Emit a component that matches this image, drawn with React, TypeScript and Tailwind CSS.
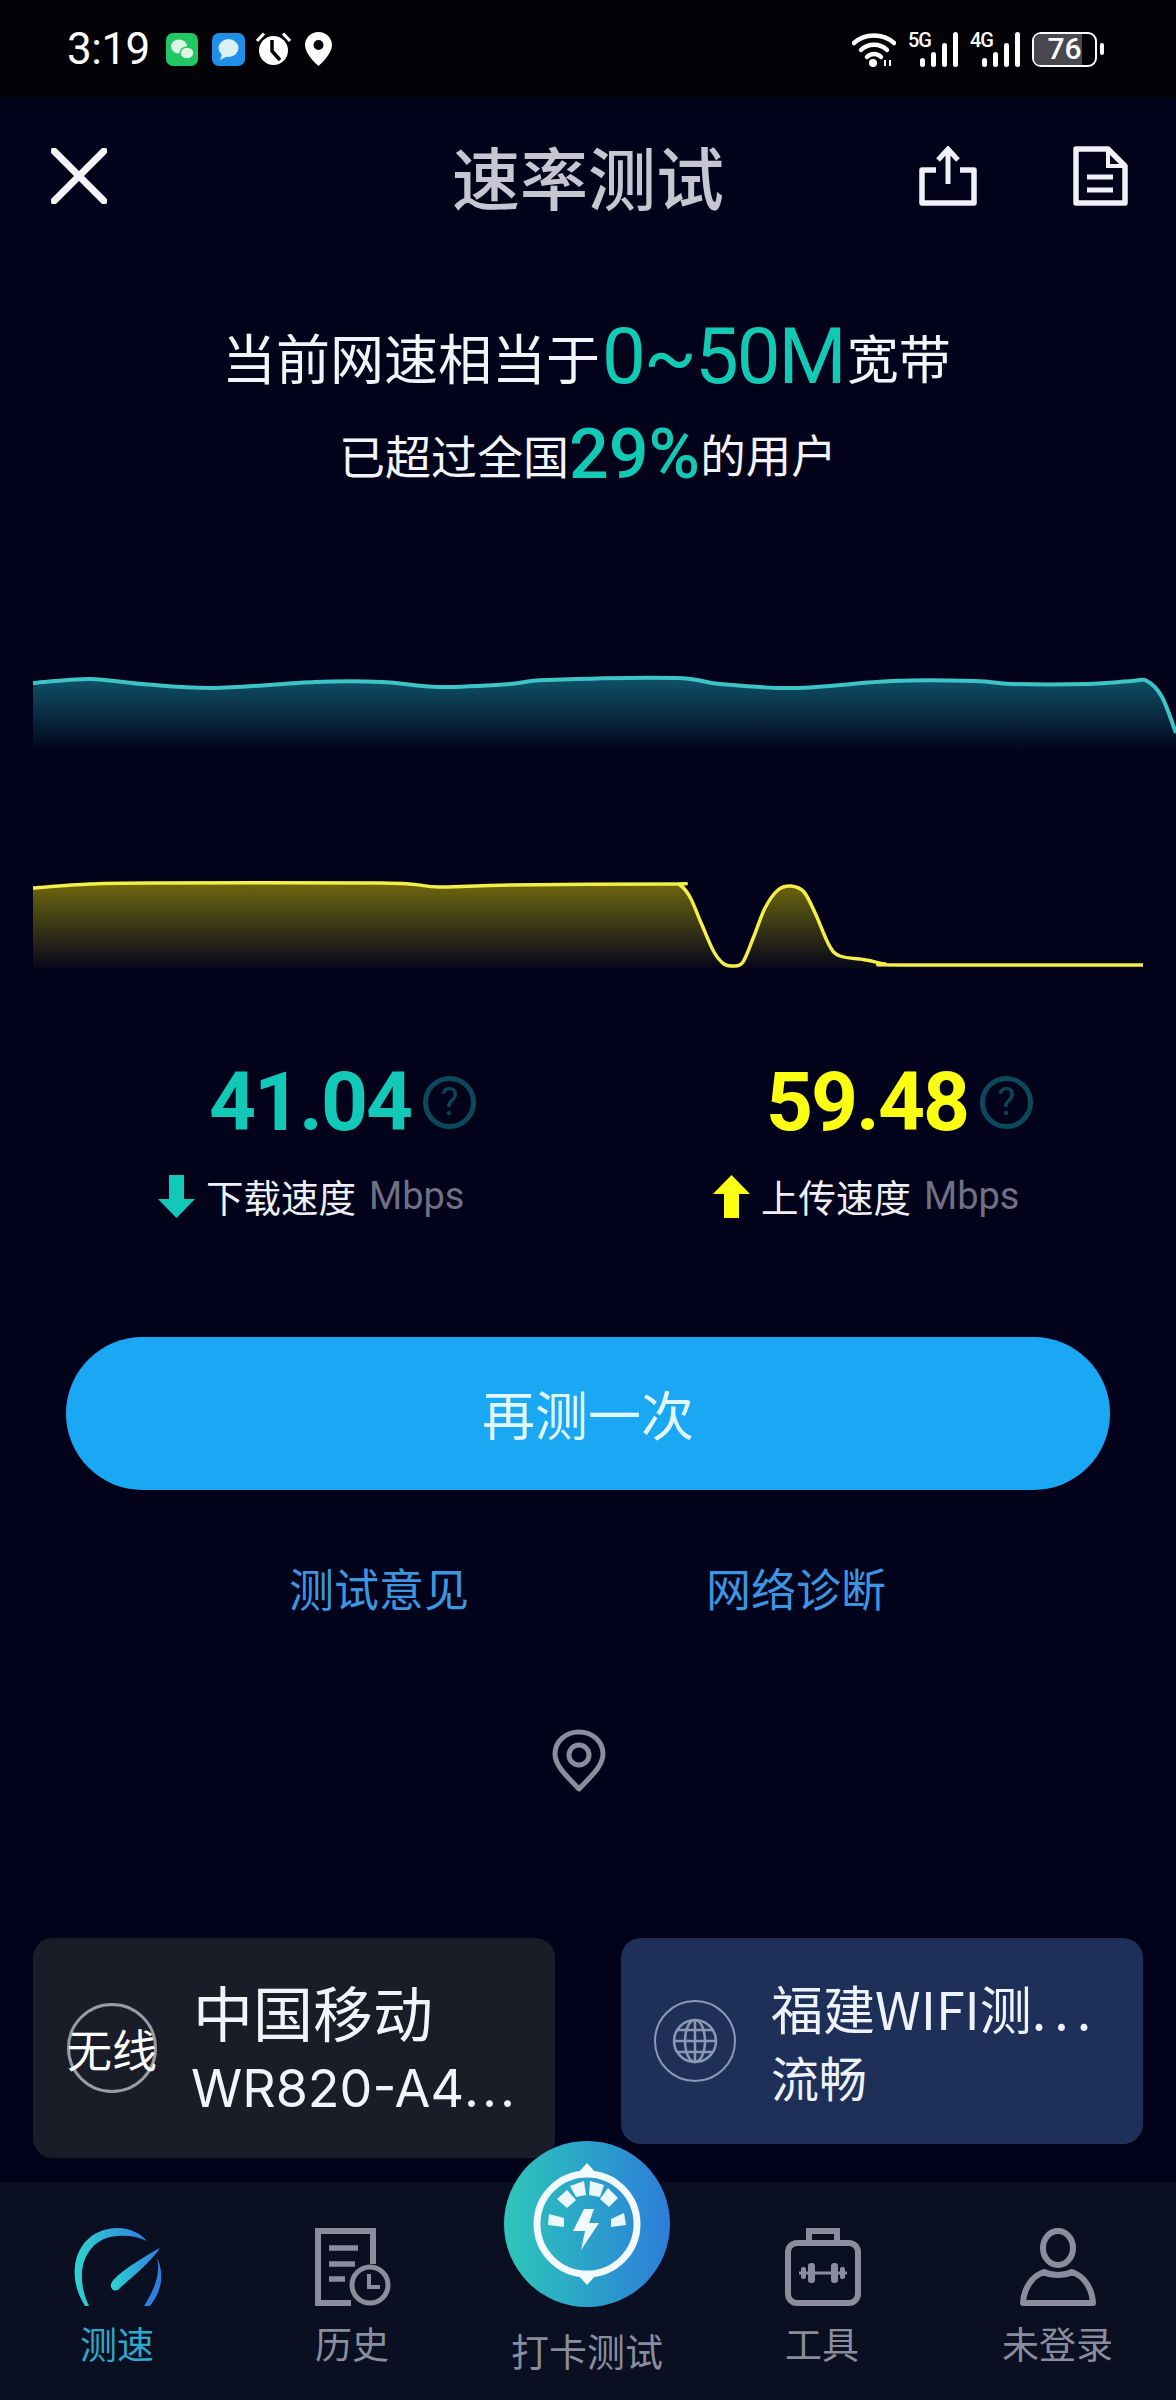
import React from "react";

function smooth(p: number[][]) {
  let d = `M${p[0][0]} ${p[0][1]}`;
  for (let i = 0; i < p.length - 1; i++) {
    const a = p[Math.max(0, i - 1)], b = p[i], c = p[i + 1], e = p[Math.min(p.length - 1, i + 2)];
    const c1x = b[0] + (c[0] - a[0]) / 6, c1y = b[1] + (c[1] - a[1]) / 6;
    const c2x = c[0] - (e[0] - b[0]) / 6, c2y = c[1] - (e[1] - b[1]) / 6;
    d += ` C${c1x} ${c1y} ${c2x} ${c2y} ${c[0]} ${c[1]}`;
  }
  return d;
}

const teal = [[33,683],[90,679],[142,684],[214,688],[315,682],[382,682],[439,687],[510,684],[547,680],[675,678],[720,684],[795,688],[892,681],[975,681],[1012,684],[1087,684],[1132,681],[1147,681],[1162,697],[1176,733]];
const yellow = [[33,888],[90,884],[150,883],[382,883],[439,887],[510,885],[672,884],[680,885],[690,897],[702,925],[714,952],[724,964],[733,966],[743,962],[754,936],[765,908],[778,890],[791,886],[804,892],[816,915],[829,945],[840,956],[866,960],[885,964],[900,965],[1143,965]];

function Chart() {
  const t = smooth(teal), y = smooth(yellow);
  return (
    <svg width="1176" height="310" viewBox="0 660 1176 310" className="block mt-[164px]">
      <defs>
        <linearGradient id="gt" gradientUnits="userSpaceOnUse" x1="0" y1="678" x2="0" y2="750">
          <stop offset="0" stopColor="#0f5268" />
          <stop offset="1" stopColor="#03051c" />
        </linearGradient>
        <linearGradient id="gy" gradientUnits="userSpaceOnUse" x1="0" y1="883" x2="0" y2="968">
          <stop offset="0" stopColor="#6e680e" />
          <stop offset="1" stopColor="#07071a" />
        </linearGradient>
      </defs>
      <path d={`${t} L1176 750 L33 750 Z`} fill="url(#gt)" />
      <path d={t} fill="none" stroke="#3cc4c6" strokeWidth="4" />
      <path d={`${y} L1143 968 L33 968 Z`} fill="url(#gy)" />
      <path d={y} fill="none" stroke="#f3ef48" strokeWidth="3.5" />
    </svg>
  );
}

function Question() {
  return (
    <span className="w-[53px] h-[53px] rounded-full border-[5px] border-[#0b4a5c] flex items-center justify-center text-[#0e4458] text-[38px] leading-none font-['Roboto',sans-serif]">?</span>
  );
}

function Stat({ value, color, label, up, pl, numPl }: { value: string; color: string; label: string; up?: boolean; pl: string; numPl: string }) {
  return (
    <div className={pl}>
      <div className={`flex items-center h-[80px] ${numPl}`}>
        <span className="text-[82px] leading-none font-bold tracking-[-2px] font-['Roboto',sans-serif]" style={{ color }}>{value}</span>
        <span className="ml-[12px]"><Question /></span>
      </div>
      <div className="flex items-center h-[60px] mt-[24px]">
        <svg width="37" height="43" viewBox="0 0 37 43" className="mr-[11px]">
          {up ? <path d="M18.5 0 L37 19 H26 V43 H11 V19 H0 Z" fill={color} /> : <path d="M18.5 43 L37 24 H26 V0 H11 V24 H0 Z" fill={color} />}
        </svg>
        <span className="text-[37.5px] leading-none text-[#eef0f6] font-['Noto_Sans_CJK_SC',sans-serif]">{label}</span>
        <span className="ml-[13px] text-[38px] leading-none text-[#6e7084] font-['Roboto',sans-serif]">Mbps</span>
      </div>
    </div>
  );
}

function Signal({ label, className }: { label: string; className: string }) {
  return (
    <div className={`relative w-[50px] h-[35px] ${className}`}>
      <span className="absolute left-0 top-[-2px] text-[20px] leading-[20px] font-medium text-white font-['Roboto',sans-serif] tracking-[-1px]">{label}</span>
      <div className="absolute inset-0 flex items-end justify-end gap-[6px]">
        <div className="w-[5px] h-[9px] rounded-full bg-white" />
        <div className="w-[5px] h-[15px] rounded-full bg-white" />
        <div className="w-[5px] h-[24px] rounded-full bg-white" />
        <div className="w-[5px] h-[35px] rounded-full bg-white" />
      </div>
    </div>
  );
}

function StatusBar() {
  return (
    <div className="h-[98px] bg-[#020207] flex items-center justify-between pl-[67px] pr-[72px] shrink-0">
      <div className="flex items-center">
        <span className="text-[44px] leading-none text-white font-['Roboto',sans-serif] tracking-[-0.5px]">3:19</span>
        <svg width="32" height="33" viewBox="0 0 32 33" className="ml-[16px]">
          <rect width="32" height="33" rx="7" fill="#1fc765" />
          <ellipse cx="13" cy="13.5" rx="8" ry="7" fill="#dff5e4" />
          <ellipse cx="21" cy="20" rx="7" ry="6" fill="#dff5e4" stroke="#1fc765" strokeWidth="1.5" />
        </svg>
        <svg width="33" height="33" viewBox="0 0 33 33" className="ml-[14px]">
          <rect width="33" height="33" rx="7" fill="#1f8fe8" />
          <ellipse cx="16.5" cy="15" rx="10" ry="9" fill="#d8f1f3" />
          <path d="M10 21 L8 27 L16 23 Z" fill="#d8f1f3" />
        </svg>
        <svg width="35" height="34" viewBox="0 0 35 34" className="ml-[11px]">
          <circle cx="17.5" cy="18.5" r="14.5" fill="white" />
          <path d="M16 8 V19 L24 28" fill="none" stroke="#020207" strokeWidth="3.5" />
          <path d="M1 9 L8 1.5 M34 9 L27 1.5" stroke="white" strokeWidth="3" />
        </svg>
        <svg width="27" height="34" viewBox="0 0 27 34" className="ml-[14px]">
          <path fillRule="evenodd" d="M13.5 0 C21 0 27 5.8 27 13 C27 21 18 30 13.5 34 C9 30 0 21 0 13 C0 5.8 6 0 13.5 0 Z M13.5 8 A5 5 0 1 0 13.5 18 A5 5 0 1 0 13.5 8 Z" fill="white" />
        </svg>
      </div>
      <div className="flex items-center">
        <svg width="44" height="35" viewBox="0 0 44 35">
          <g fill="none" stroke="white" strokeWidth="4.5" strokeLinecap="round">
            <path d="M2 11 C13 1 31 1 42 11" />
            <path d="M9 18 C16 11 28 11 35 18" />
            <path d="M15 25 C19 21 25 21 29 25" />
          </g>
          <circle cx="21" cy="31" r="4" fill="white" />
          <path d="M33 34 V28 M38 28 V34" stroke="white" strokeWidth="2" />
        </svg>
        <Signal label="5G" className="ml-[12px]" />
        <Signal label="4G" className="ml-[12px]" />
        <div className="relative ml-[12px] w-[65px] h-[35px] rounded-[9px] border-[2.5px] border-white bg-[#020207] flex items-center justify-center">
          <div className="absolute left-0 top-0 bottom-0 w-[48px] rounded-l-[6px] bg-[#48484e]" />
          <span className="relative text-[30px] leading-[30px] font-medium text-white font-['Roboto',sans-serif]">76</span>
        </div>
        <div className="ml-[3px] w-[4px] h-[12px] rounded-full bg-white" />
      </div>
    </div>
  );
}

function Header() {
  return (
    <div className="relative h-[156px] flex items-center justify-between pl-[51px] pr-[48px] shrink-0">
      <svg width="56" height="56" viewBox="0 0 56 56">
        <path d="M3 3 L53 53 M53 3 L3 53" stroke="#f4f4f8" strokeWidth="7" strokeLinecap="round" />
      </svg>
      <span className="absolute left-0 right-0 text-center text-[68px] leading-none font-medium text-[#c6c6d0] font-['Noto_Sans_CJK_SC',sans-serif]">速率测试</span>
      <div className="flex items-center">
        <svg width="60" height="60" viewBox="0 0 60 60">
          <path d="M18 24 H4 V57 H56 V24 H42" fill="none" stroke="#f0f0f6" strokeWidth="5.5" strokeLinejoin="round" />
          <path d="M30 38 V5 M20 14 L30 3 L40 14" fill="none" stroke="#f0f0f6" strokeWidth="5" />
        </svg>
        <svg width="55" height="60" viewBox="0 0 55 60" className="ml-[95px]">
          <path d="M3 3 H35 L52 20 V57 H3 Z" fill="none" stroke="#f0f0f6" strokeWidth="5.5" strokeLinejoin="round" />
          <path d="M35 3 V20 H52" fill="none" stroke="#f0f0f6" strokeWidth="4" />
          <path d="M14 31 H40 M14 44 H40" stroke="#f0f0f6" strokeWidth="5" />
        </svg>
      </div>
    </div>
  );
}

function TabLabel({ children, color = "text-[#8a8d9c]", size = "text-[37px]" }: { children: React.ReactNode; color?: string; size?: string }) {
  return <span className={`${size} leading-none whitespace-nowrap font-['Noto_Sans_CJK_SC',sans-serif] ${color}`}>{children}</span>;
}

function SpeedIcon() {
  return (
    <svg width="90" height="78" viewBox="0 0 90 78">
      <defs>
        <linearGradient id="sp" x1="0" y1="0" x2="1" y2="0">
          <stop offset="0" stopColor="#2fd4d0" />
          <stop offset="1" stopColor="#2f7fe0" />
        </linearGradient>
      </defs>
      <path d="M12 78 C-10 44 4 1 44 0 C58 0 68 6 74 13 C64 8 54 7 44 8 C14 10 -1 42 16 78 Z" fill="url(#sp)" />
      <path d="M71 78 C81 62 88 46 84 30 C91 44 90 62 77 78 Z" fill="#2f7fe0" />
      <path d="M87 20 C72 28 46 44 39 54 C35 60 42 66 47 60 C56 52 78 34 87 20 Z" fill="url(#sp)" />
    </svg>
  );
}

function HistoryIcon() {
  return (
    <svg width="76" height="78" viewBox="0 0 76 78">
      <path d="M36 75 H3 V3 H58 V36" fill="none" stroke="#8a8d9c" strokeWidth="6" />
      <path d="M14 20 H43 M14 36 H40 M14 51 H30" stroke="#8a8d9c" strokeWidth="5.5" />
      <circle cx="55" cy="57" r="18" fill="none" stroke="#8a8d9c" strokeWidth="5" />
      <path d="M54 46 V59 H65" fill="none" stroke="#8a8d9c" strokeWidth="4" />
    </svg>
  );
}

function ToolIcon() {
  return (
    <svg width="76" height="78" viewBox="0 0 76 78">
      <path d="M24 14 V3 H52 V14" fill="none" stroke="#8a8d9c" strokeWidth="6" />
      <rect x="3" y="15" width="70" height="60" rx="9" fill="none" stroke="#8a8d9c" strokeWidth="6" />
      <path d="M14 45 H62" stroke="#8a8d9c" strokeWidth="3" />
      <rect x="23" y="35" width="7" height="20" rx="3" fill="#8a8d9c" />
      <rect x="46" y="35" width="7" height="20" rx="3" fill="#8a8d9c" />
      <rect x="16" y="39" width="5" height="12" rx="2" fill="#8a8d9c" />
      <rect x="55" y="39" width="5" height="12" rx="2" fill="#8a8d9c" />
    </svg>
  );
}

function UserIcon() {
  return (
    <svg width="76" height="78" viewBox="0 0 76 78">
      <ellipse cx="38" cy="20" rx="15" ry="17" fill="none" stroke="#8a8d9c" strokeWidth="6" />
      <path d="M24 44 C12 48 4 60 3 75 H73 C72 60 64 48 52 44 C44 48 32 48 24 44 Z" fill="none" stroke="#8a8d9c" strokeWidth="6" strokeLinejoin="round" />
    </svg>
  );
}

function CenterIcon() {
  return (
    <div className="absolute left-[504px] top-[-41px] w-[166px] h-[166px] rounded-full bg-gradient-to-r from-[#30c6b8] to-[#2f7cd8] flex items-center justify-center">
      <svg width="110" height="122" viewBox="0 0 110 122">
        <circle cx="55" cy="61" r="50" fill="none" stroke="#f3fafd" strokeWidth="7" />
        <path d="M45 11 L55 0 L65 11 Z M45 111 L55 122 L65 111 Z" fill="#f3fafd" />
        <path d="M17 51 L32 55 L32 64 L16 62 Z" fill="#eaf7fb" />
        <path d="M25 36 L35 27 L44 37 L35 45 Z" fill="#eaf7fb" />
        <path d="M38 23 L52 18 L54 32 L44 34 Z" fill="#eaf7fb" />
        <path d="M58 18 L72 22 L68 34 L57 32 Z" fill="#eaf7fb" />
        <path d="M76 25 L86 35 L77 44 L68 36 Z" fill="#eaf7fb" />
        <path d="M79 56 L92 50 L94 62 L79 64 Z" fill="#eaf7fb" />
        <path d="M52 46 L62 46 L57 60 L67 60 L49 87 L53 68 L41 68 Z" fill="#f3fafd" />
      </svg>
    </div>
  );
}

export default function App() {
  return (
    <div className="relative w-[1176px] h-[2400px] bg-[#02021a] flex flex-col overflow-hidden font-['Noto_Sans_CJK_SC',sans-serif]">
      <StatusBar />
      <Header />

      <div className="mt-[63px] h-[80px] flex items-center pl-[222px] text-[#f2f4f8]">
        <span className="text-[54px] leading-none">当前网速相当于</span>
        <span className="ml-[2px] text-[78px] leading-none tracking-[-2px] text-[#12c9b4] font-['Roboto',sans-serif]">0~50M</span>
        <span className="ml-[2px] text-[52px] leading-none">宽带</span>
      </div>
      <div className="mt-[17px] h-[80px] flex items-center pl-[339px] text-[#f2f4f8]">
        <span className="text-[46px] leading-none">已超过全国</span>
        <span className="text-[70px] leading-none text-[#12c9b4] font-medium font-['Roboto',sans-serif]">29%</span>
        <span className="text-[45.5px] leading-none">的用户</span>
      </div>

      <div className="mt-[2px]"><Chart /></div>

      <div className="mt-[92px] grid grid-cols-[713px_1fr]">
        <Stat value="41.04" color="#12c9b8" label="下载速度" pl="pl-[158px]" numPl="pl-[51px]" />
        <Stat value="59.48" color="#fbff12" label="上传速度" up pl="" numPl="pl-[53px]" />
      </div>

      <button className="mt-[111px] mx-[66px] h-[153px] rounded-full bg-[#1aa8f5] text-[53px] leading-none text-[#e4f6fd] flex items-center justify-center">再测一次</button>

      <div className="mt-[67px] h-[60px] flex items-center pl-[289px] text-[45px] leading-none text-[#3b96e2]">
        <span>测试意见</span>
        <span className="ml-[237px]">网络诊断</span>
      </div>

      <div className="mt-[112px] pl-[552px]">
        <svg width="54" height="63" viewBox="0 0 54 63" className="block">
          <path d="M27 60 C18 50 3 38 3 25 C3 12 14 3 27 3 C40 3 51 12 51 25 C51 38 36 50 27 60 Z" fill="none" stroke="#8a8d9c" strokeWidth="5" strokeLinejoin="round" />
          <circle cx="27" cy="26" r="10" fill="none" stroke="#8a8d9c" strokeWidth="5" />
        </svg>
      </div>

      <div className="mt-[146px] px-[33px] flex items-start justify-between">
        <div className="w-[522px] h-[220px] rounded-[20px] bg-[#1a1c28] flex items-center pl-[34px]">
          <div className="w-[90px] h-[90px] rounded-full border-[3px] border-[#9a9ba4] flex items-center justify-center shrink-0">
            <span className="text-[45px] leading-none text-white whitespace-nowrap">无线</span>
          </div>
          <div className="ml-[34px] flex flex-col text-[#f2f4fa]">
            <span className="pl-[2px] text-[60px] leading-none">中国移动</span>
            <span className="mt-[22px] text-[52px] leading-none whitespace-nowrap font-['Inter',sans-serif]">WR820-A4<span className="tracking-[3px]">...</span></span>
          </div>
        </div>
        <div className="w-[522px] h-[206px] rounded-[20px] bg-[#1f3058] flex items-center pl-[33px]">
          <div className="w-[82px] h-[82px] rounded-full border-[2px] border-[#8d98b4] flex items-center justify-center shrink-0">
            <svg width="48" height="48" viewBox="0 0 48 48" fill="none" stroke="#8d98b4" strokeWidth="2.5">
              <circle cx="24" cy="24" r="21" />
              <ellipse cx="24" cy="24" rx="10" ry="21" />
              <path d="M24 3 V45 M3 24 H45 M6 13 H42 M6 35 H42" />
            </svg>
          </div>
          <div className="ml-[35px] flex flex-col text-[#eef2fa]">
            <span className="text-[52px] leading-none whitespace-nowrap">福建WIFI测<span className="tracking-[8px]">...</span></span>
            <span className="mt-[18px] text-[48px] leading-none">流畅</span>
          </div>
        </div>
      </div>

      <div className="relative mt-[24px] flex-1 bg-[#0a0f22]">
        <CenterIcon />
        <div className="absolute left-[73px] top-[46px]"><SpeedIcon /></div>
        <div className="absolute left-[315px] top-[46px]"><HistoryIcon /></div>
        <div className="absolute left-[785px] top-[46px]"><ToolIcon /></div>
        <div className="absolute left-[1020px] top-[46px]"><UserIcon /></div>
        <div className="absolute left-[80px] top-[143px]"><TabLabel color="text-[#2fa8cc]">测速</TabLabel></div>
        <div className="absolute left-[315px] top-[143px]"><TabLabel>历史</TabLabel></div>
        <div className="absolute left-[511px] top-[149px]"><TabLabel size="text-[38px]">打卡测试</TabLabel></div>
        <div className="absolute left-[785px] top-[143px]"><TabLabel>工具</TabLabel></div>
        <div className="absolute left-[1002px] top-[143px]"><TabLabel>未登录</TabLabel></div>
      </div>
    </div>
  );
}
